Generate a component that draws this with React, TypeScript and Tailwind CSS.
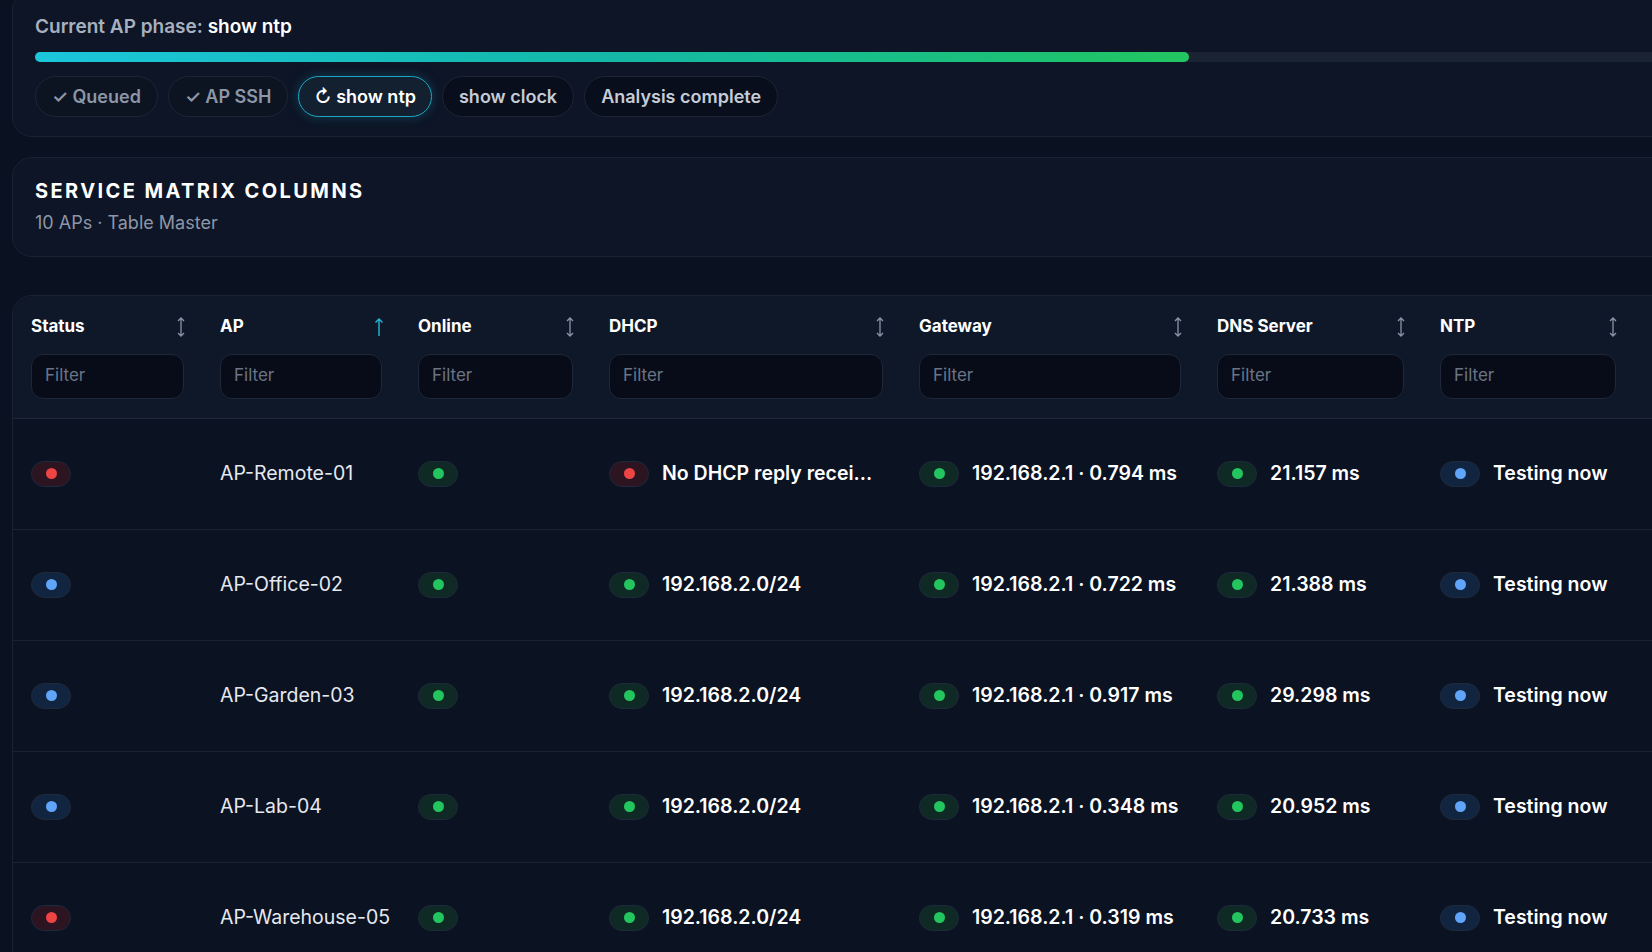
import React from "react";

type K = "g" | "r" | "b";
const Dot = ({ k }: { k: K }) => {
  const bg = k === "g" ? "bg-[#0f2a24]" : k === "r" ? "bg-[#2c1421]" : "bg-[#122540]";
  const dc = k === "g" ? "bg-[#22c55e]" : k === "r" ? "bg-[#ef4444]" : "bg-[#60a5fa]";
  return (
    <span className={`inline-flex h-[26px] w-[40px] shrink-0 items-center justify-center rounded-full border border-[#1e293b] ${bg}`}>
      <span className={`h-[11px] w-[11px] rounded-full ${dc}`} />
    </span>
  );
};

const Sort = ({ active }: { active?: boolean }) =>
  active ? (
    <svg width="10" height="20" viewBox="0 0 10 20" className="text-[#22b8d6]"><path d="M5 19V2M1.5 5.5L5 2l3.5 3.5" stroke="currentColor" strokeWidth="1.4" fill="none" /></svg>
  ) : (
    <svg width="10" height="22" viewBox="0 0 10 22" className="text-[#8a94a6]"><path d="M5 2v18M2 5l3-3 3 3M2 17l3 3 3-3" stroke="currentColor" strokeWidth="1.3" fill="none" /></svg>
  );

const cols = [
  { n: "Status", w: "w-[189px]" },
  { n: "AP", w: "w-[198px]", a: true },
  { n: "Online", w: "w-[191px]" },
  { n: "DHCP", w: "w-[310px]" },
  { n: "Gateway", w: "w-[298px]" },
  { n: "DNS Server", w: "w-[223px]" },
  { n: "NTP", w: "w-[212px]" },
];

const rows: { s: K; ap: string; dh: [K, string]; gw: string; dns: string }[] = [
  { s: "r", ap: "AP-Remote-01", dh: ["r", "No DHCP reply recei..."], gw: "192.168.2.1 · 0.794 ms", dns: "21.157 ms" },
  { s: "b", ap: "AP-Office-02", dh: ["g", "192.168.2.0/24"], gw: "192.168.2.1 · 0.722 ms", dns: "21.388 ms" },
  { s: "b", ap: "AP-Garden-03", dh: ["g", "192.168.2.0/24"], gw: "192.168.2.1 · 0.917 ms", dns: "29.298 ms" },
  { s: "b", ap: "AP-Lab-04", dh: ["g", "192.168.2.0/24"], gw: "192.168.2.1 · 0.348 ms", dns: "20.952 ms" },
  { s: "r", ap: "AP-Warehouse-05", dh: ["g", "192.168.2.0/24"], gw: "192.168.2.1 · 0.319 ms", dns: "20.733 ms" },
];

const Cell = ({ k, t }: { k: K; t: string }) => (
  <div className="flex items-center gap-[13px] text-[19.5px] font-semibold text-white whitespace-nowrap">
    <Dot k={k} />
    {t}
  </div>
);

export default function App() {
  return (
    <div className="h-[952px] w-[1652px] overflow-hidden bg-[#0a1120] pl-[12px] text-white" style={{ fontFamily: "Inter, 'Noto Sans', sans-serif" }}>
      <div className="w-[1700px] -mt-[10px] rounded-[20px] border border-[#1a2334] bg-[#0d1526] pl-[22px] pt-[22px] pb-[19px]">
        <div className="text-[19px] font-semibold text-[#a7b0bf]">Current AP phase: <span className="text-white">show ntp</span></div>
        <div className="mt-[10px] h-[10px] w-[1630px] rounded-full bg-[#1a2332]">
          <div className="h-full w-[1154px] rounded-full bg-gradient-to-r from-[#1cc6dc] via-[#14b8a6] to-[#22c55e]" />
        </div>
        <div className="mt-[14px] flex gap-[10px] text-[18px] font-semibold">
          <span className="rounded-full border border-[#1c2637] bg-[#0c1422] px-[16px] py-[6px] text-[#8d96a6]">✓ Queued</span>
          <span className="rounded-full border border-[#1c2637] bg-[#0c1422] px-[16px] py-[6px] text-[#8d96a6]">✓ AP SSH</span>
          <span className="rounded-full border border-[#1aa8c4] bg-[#12202f] px-[15px] py-[6px] text-white shadow-[0_0_12px_rgba(34,184,214,0.25)]">↻ show ntp</span>
          <span className="rounded-full border border-[#1c2637] bg-[#080e1b] px-[16px] py-[6px] text-[#c5ccd7]">show clock</span>
          <span className="rounded-full border border-[#1c2637] bg-[#080e1b] px-[16px] py-[6px] text-[#c5ccd7]">Analysis complete</span>
        </div>
      </div>
      <div className="mt-[20px] w-[1700px] rounded-[20px] border border-[#1a2334] bg-[#0d1526] pl-[22px] pt-[18px] pb-[20px]">
        <div className="text-[20px] font-bold tracking-[0.12em] text-white">SERVICE MATRIX COLUMNS</div>
        <div className="mt-[3px] text-[18px] text-[#8d96a6]">10 APs · Table Master</div>
      </div>
      <div className="mt-[38px] w-[1700px] rounded-t-[20px] border border-[#1a2334] bg-[#0a1120]">
        <div className="flex border-b border-[#1e2839] bg-[#0f1829] pl-[18px] pt-[18px] pb-[19px] rounded-t-[20px]">
          {cols.map((c) => (
            <div key={c.n} className={`${c.w} shrink-0`}>
              <div className="flex items-center justify-between pr-[34px] h-[26px]">
                <span className="text-[17px] font-bold text-white">{c.n}</span>
                <Sort active={c.a} />
              </div>
              <div className="mt-[14px] mr-[36px] flex h-[45px] items-center rounded-[12px] border border-[#1e2839] bg-[#070c18] px-[13px] text-[17px] text-[#6b7485]">Filter</div>
            </div>
          ))}
        </div>
        {rows.map((r) => (
          <div key={r.ap} className="flex h-[111px] items-center border-b border-[#1a2334] bg-[#0b1222] pl-[18px]">
            <div className="w-[189px] shrink-0"><Dot k={r.s} /></div>
            <div className="w-[198px] shrink-0 text-[19.5px] text-[#e5e9ef]">{r.ap}</div>
            <div className="w-[191px] shrink-0"><Dot k="g" /></div>
            <div className="w-[310px] shrink-0"><Cell k={r.dh[0]} t={r.dh[1]} /></div>
            <div className="w-[298px] shrink-0"><Cell k="g" t={r.gw} /></div>
            <div className="w-[223px] shrink-0"><Cell k="g" t={r.dns} /></div>
            <div className="w-[212px] shrink-0"><Cell k="b" t="Testing now" /></div>
          </div>
        ))}
      </div>
    </div>
  );
}
